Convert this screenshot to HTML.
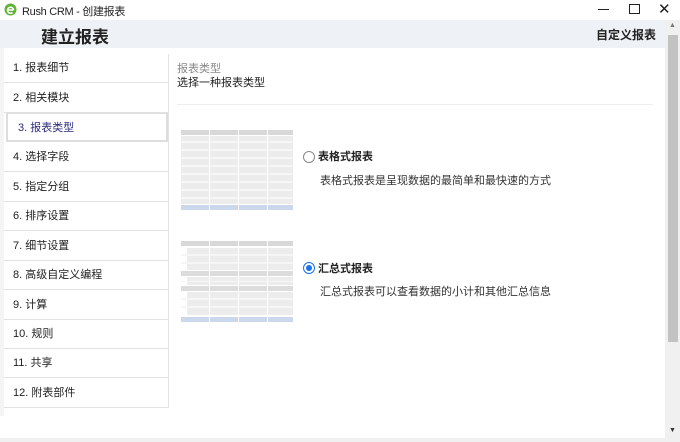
<!DOCTYPE html>
<html><head><meta charset="utf-8"><style>
body{margin:0;width:680px;height:442px;overflow:hidden;background:#fff;font-family:"Liberation Sans","Noto Sans CJK SC",sans-serif;position:relative}
.a{position:absolute}
.nav div{position:absolute;left:4px;width:164px;height:29px;border-bottom:1px solid #e2e2e2;font-size:11px;color:#222;line-height:29px;text-indent:9px;box-sizing:border-box;background:#fff}
</style></head><body>
<div class="a" style="left:0;top:0;width:680px;height:20px;background:#fff"></div>
<svg class="a" style="left:4px;top:3px" width="13" height="13" viewBox="0 0 13 13"><circle cx="6.5" cy="6.5" r="6" fill="#5fb336"/><path d="M3.5 7h6M9.5 7a3 3 0 1 0-1 2.5" stroke="#fff" stroke-width="1.6" fill="none"/></svg>
<div class="a" style="left:22px;top:3px;font-size:11px;color:#222;letter-spacing:-0.3px">Rush CRM - 创建报表</div>
<div class="a" style="left:598px;top:9px;width:11px;height:1px;background:#222"></div>
<div class="a" style="left:629px;top:4px;width:9px;height:8px;border:1px solid #222"></div>
<div class="a" style="left:658px;top:0px;font-size:15px;color:#222">✕</div>
<div class="a" style="left:0;top:20px;width:665px;height:28px;background:#eef1f5"></div>
<div class="a" style="left:41px;top:23px;font-size:17px;font-weight:bold;color:#222">建立报表</div>
<div class="a" style="left:596px;top:26px;font-size:12px;font-weight:bold;color:#222">自定义报表</div>
<div class="a" style="left:0;top:48px;width:4px;height:368px;background:#f4f4f4"></div>
<div class="nav">
<div style="top:54px">1. 报表细节</div>
<div style="top:84px">2. 相关模块</div>
<div style="top:113px;left:6px;width:162px;border:2px solid #ddd;border-top:1px solid #ddd;color:#2b2b7a;text-indent:10px">3. 报表类型</div>
<div style="top:143px">4. 选择字段</div>
<div style="top:173px">5. 指定分组</div>
<div style="top:202px">6. 排序设置</div>
<div style="top:232px">7. 细节设置</div>
<div style="top:261px">8. 高级自定义编程</div>
<div style="top:291px">9. 计算</div>
<div style="top:320px">10. 规则</div>
<div style="top:349px">11. 共享</div>
<div style="top:379px">12. 附表部件</div>
</div>
<div class="a" style="left:168px;top:54px;width:1px;height:354px;background:#e4e4e4"></div>
<div class="a" style="left:177px;top:60px;font-size:11px;color:#888">报表类型</div>
<div class="a" style="left:177px;top:74px;font-size:11px;color:#222">选择一种报表类型</div>
<div class="a" style="left:177px;top:104px;width:476px;height:1px;background:#eee"></div>
<svg class="a" style="left:181px;top:130px" width="112" height="80">
<rect width="112" height="5" fill="#d8d8d8"/>
<rect y="6" width="112" height="68" fill="#ececec"/>
<g fill="#f6f6f6"><rect y="11" width="112" height="2"/><rect y="19" width="112" height="2"/><rect y="27" width="112" height="2"/><rect y="35" width="112" height="2"/><rect y="43" width="112" height="2"/><rect y="51" width="112" height="2"/><rect y="59" width="112" height="2"/><rect y="67" width="112" height="2"/></g>
<rect y="75" width="112" height="5" fill="#cbd8ec"/>
<g fill="#fff"><rect x="28" width="1" height="80"/><rect x="57" width="1" height="80"/><rect x="86" width="1" height="80"/></g>
</svg>
<svg class="a" style="left:181px;top:241px" width="112" height="81">
<rect width="112" height="5" fill="#d8d8d8"/>
<rect x="6" y="7" width="106" height="22" fill="#ececec"/>
<rect y="30" width="112" height="5" fill="#dcdcdc"/>
<rect x="6" y="36" width="106" height="8" fill="#ececec"/>
<rect y="45" width="112" height="5" fill="#dcdcdc"/>
<rect x="6" y="51" width="106" height="23" fill="#ececec"/>
<g fill="#f6f6f6"><rect y="13" width="112" height="2"/><rect y="21" width="112" height="2"/><rect y="40" width="112" height="1"/><rect y="57" width="112" height="2"/><rect y="65" width="112" height="2"/></g>
<rect y="76" width="112" height="5" fill="#cbd8ec"/>
<g fill="#fff"><rect x="28" width="1" height="81"/><rect x="57" width="1" height="81"/><rect x="86" width="1" height="81"/></g>
</svg>
<div class="a" style="left:303px;top:151px;width:10px;height:10px;border:1px solid #888;border-radius:50%"></div>
<div class="a" style="left:318px;top:148px;font-size:11px;font-weight:bold;color:#222">表格式报表</div>
<div class="a" style="left:320px;top:172px;font-size:11px;color:#333">表格式报表是呈现数据的最简单和最快速的方式</div>
<div class="a" style="left:303px;top:262px;width:10px;height:10px;border:1px solid #1a73e8;border-radius:50%"></div>
<div class="a" style="left:306px;top:265px;width:6px;height:6px;background:#1a73e8;border-radius:50%"></div>
<div class="a" style="left:318px;top:260px;font-size:11px;font-weight:bold;color:#222">汇总式报表</div>
<div class="a" style="left:320px;top:283px;font-size:11px;color:#333">汇总式报表可以查看数据的小计和其他汇总信息</div>
<div class="a" style="left:665px;top:20px;width:15px;height:418px;background:#f0f0f0"></div>
<div class="a" style="left:668px;top:35px;width:10px;height:307px;background:#c2c2c2"></div>
<div class="a" style="left:669px;top:22px;font-size:7px;color:#777">▲</div>
<div class="a" style="left:669px;top:427px;font-size:7px;color:#333">▼</div>
<div class="a" style="left:0;top:438px;width:680px;height:4px;background:#f0f0f0"></div>
</body></html>
